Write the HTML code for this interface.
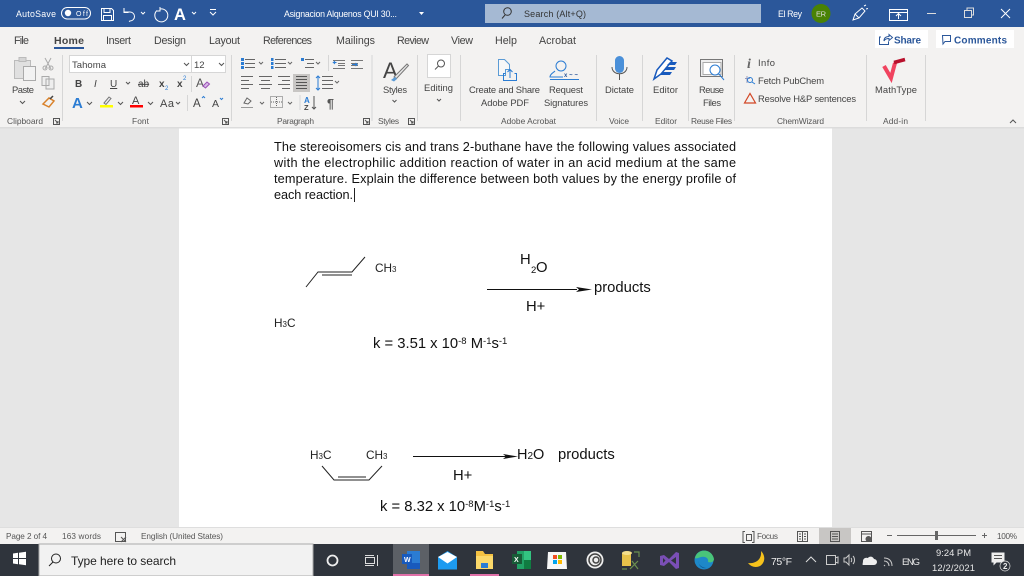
<!DOCTYPE html>
<html><head><meta charset="utf-8"><title>Word</title>
<style>
html,body{margin:0;padding:0;width:1024px;height:576px;overflow:hidden;background:#e6e6e6}
svg{display:block;font-family:"Liberation Sans",sans-serif}
.t{font-size:8.8px;fill:#fff}
.tab{font-size:10.7px;fill:#444}
.r{font-size:9.4px;fill:#444}
.g{font-size:8.4px;fill:#555}
.s{font-size:8.2px;fill:#555}
.d{font-size:12.7px;fill:#111}
.ic{fill:none;stroke:#555;stroke-width:1}
.ib{fill:none;stroke:#2b7cd3;stroke-width:1}
.w{fill:none;stroke:#fff;stroke-width:1}
.tb{font-size:9.400px;fill:#e8e8e8}
.big{font-size:14.8px;fill:#111}
.sup{font-size:9.5px}
.lab{font-size:11.8px;fill:#222}
</style></head><body>
<svg xmlns="http://www.w3.org/2000/svg" width="1024" height="576" viewBox="0 0 1024 576">
<!-- backgrounds -->
<rect width="1024" height="576" fill="#e6e6e6"/>
<rect x="179" y="128" width="653" height="399" fill="#fff"/>
<rect y="0" width="1024" height="27" fill="#2b579a"/>
<rect y="27" width="1024" height="100" fill="#f3f2f1"/>
<rect y="127" width="1024" height="1.5" fill="#dcdcdc"/>
<rect y="527" width="1024" height="1" fill="#dedede"/>
<rect y="528" width="1024" height="16" fill="#f3f2f1"/>
<rect y="544" width="1024" height="32" fill="#2f343c"/>

<!-- title bar -->
<text x="16" y="17" class="t" textLength="40">AutoSave</text>
<rect x="61.5" y="7.500" width="29" height="11.500" rx="5.700" fill="none" stroke="#fff"/>
<circle cx="68" cy="13" r="3.200" fill="#fff"/>
<text x="76" y="16" style="font-size:7px;fill:#fff" textLength="12">Off</text>
<path class="w" d="M101.500 8.500h10l2 2v10h-12zM104 8.500v4h6v-4M103.500 20.500v-5h8v5"/>
<path class="w" d="M124 12h6a4.500 4.500 0 0 1 0 9l-1 .5M124 8v4.500h4.500"/>
<path class="w" d="M141 12l2 2 2-2" stroke-width=".8"/>
<path class="w" d="M160 8a6.500 6.500 0 1 1-3 1.500M160 6v4h-3" transform="translate(0 1)"/>
<text x="174" y="20" style="font-size:16.500px;font-weight:bold;fill:#fff">A</text>
<path class="w" d="M192 12l2 2 2-2M210 12l3 3 3-3M210 9.500h6" stroke-width=".8"/>
<text x="284" y="17" class="t" textLength="113">Asignacion Alquenos QUI 30...</text>
<path d="M419 12h5l-2.500 3z" fill="#fff"/>
<rect x="485" y="4" width="276" height="19" fill="#a5b9d3"/>
<circle cx="507.500" cy="11.500" r="3.800" fill="none" stroke="#333"/><path d="M505 15l-3 3.500" stroke="#333" fill="none"/>
<text x="524" y="17" style="font-size:9px;fill:#333" textLength="62">Search (Alt+Q)</text>
<text x="778" y="17" class="t" textLength="24">El Rey</text>
<circle cx="821" cy="13.500" r="9.500" fill="#498205"/>
<text x="816" y="16.500" style="font-size:7.500px;fill:#ddd" textLength="10">ER</text>
<path class="w" d="M853 20l2-6 7-6 3 3-6 7zM855 14l4 4M864 6l2-1M866 9l2-.5" />
<path class="w" d="M889.500 9.500h18v11h-18zM889.500 12.500h18M898.500 19v-5M896 16l2.500-2.500 2.500 2.500"/>
<path d="M927 13.500h9" stroke="#ddd" fill="none"/>
<path d="M964.500 10.500h7v7h-7zM967 10v-2h6.500v7h-2" fill="none" stroke="#ddd" stroke-width="1"/>
<path d="M1001 9l9 9M1010 9l-9 9" stroke="#fff" fill="none"/>

<!-- tabs -->
<text x="14" y="44" class="tab" textLength="15">File</text>
<text x="54" y="44" style="font-size:10.500px;font-weight:bold;fill:#444" textLength="30">Home</text>
<rect x="54" y="47" width="30" height="2" fill="#2b579a"/>
<text x="106" y="44" class="tab" textLength="25">Insert</text>
<text x="154" y="44" class="tab" textLength="32">Design</text>
<text x="209" y="44" class="tab" textLength="31">Layout</text>
<text x="263" y="44" class="tab" textLength="49">References</text>
<text x="336" y="44" class="tab" textLength="39">Mailings</text>
<text x="397" y="44" class="tab" textLength="32">Review</text>
<text x="451" y="44" class="tab" textLength="22">View</text>
<text x="495" y="44" class="tab" textLength="22">Help</text>
<text x="539" y="44" class="tab" textLength="37">Acrobat</text>
<rect x="875" y="30" width="53" height="18" fill="#fff"/>
<path d="M881 37h-1.500v7.500h9v-3M884 41c0-3 2-4.500 5-4.500v-2l3.500 3-3.500 3v-2c-2 0-4 .5-5 2.500z" fill="none" stroke="#2b579a"/>
<text x="894" y="43.500" style="font-size:10px;fill:#2b579a;font-weight:bold" textLength="27">Share</text>
<rect x="936" y="30" width="78" height="18" fill="#fff"/>
<path d="M942.500 35.500h8v6h-5.500l-2 2.500z" fill="none" stroke="#2b579a"/>
<text x="954" y="43.500" style="font-size:10px;fill:#2b579a;font-weight:bold" textLength="53">Comments</text>

<!-- clipboard -->
<path d="M14.500 60.500h16v18h-16z" fill="#e0e0e0" stroke="#bbb"/><rect x="19" y="57.500" width="7" height="4" fill="#d5d5d5" stroke="#bbb"/><rect x="23.500" y="66.500" width="12" height="14" fill="#f2f2f2" stroke="#aaa"/>
<path d="M45 58l6 11M51 58l-6 11" stroke="#aaa" fill="none"/><circle cx="45" cy="68" r="2" fill="none" stroke="#aaa"/><circle cx="51" cy="68" r="2" fill="none" stroke="#aaa"/>
<path d="M42 76.500h7v9h-7zM46 79h8v10h-8z" fill="#eee" stroke="#aaa"/>
<text x="12" y="93" class="r" textLength="22">Paste</text>
<path d="M20 101l2.500 2.500 2.500-2.500" class="ic"/>
<path d="M43 104l6-6 5 3-5 6z" fill="#f2f2f2" stroke="#d9822b" stroke-width="1.500"/><path d="M50 99l3-3" stroke="#444" stroke-width="1.500"/>
<text x="7" y="124" class="g" textLength="36">Clipboard</text>
<path class="ic" d="M53.500 118.500h6v6h-6zM55 120l3 3M58 121v2h-2" stroke-width=".7"/>
<path d="M62.500 55v66" stroke="#d6d6d6"/>

<!-- font -->
<rect x="69.500" y="55.500" width="122" height="17" fill="#fff" stroke="#d6d6d6"/>
<rect x="191.500" y="55.500" width="34" height="17" fill="#fff" stroke="#d6d6d6"/>
<text x="72" y="68" style="font-size:9.500px;fill:#444" textLength="34">Tahoma</text>
<text x="194" y="68" style="font-size:9.500px;fill:#444">12</text>
<path class="ic" d="M184 63l2.500 2.500 2.500-2.500M219 63l2.500 2.500 2.500-2.500"/>
<text x="75" y="87" style="font-size:10px;font-weight:bold;fill:#444">B</text>
<text x="94" y="87" style="font-size:10px;font-style:italic;fill:#444">I</text>
<text x="110" y="87" style="font-size:10px;fill:#444;text-decoration:underline">U</text>
<path class="ic" d="M126 82l2 2 2-2"/>
<text x="138" y="87" style="font-size:10px;fill:#444;text-decoration:line-through">ab</text>
<text x="159" y="87" style="font-size:10px;font-weight:bold;fill:#444">x</text><text x="165" y="90" style="font-size:6px;fill:#2b7cd3">2</text>
<text x="177" y="87" style="font-size:10px;font-weight:bold;fill:#444">x</text><text x="183" y="80" style="font-size:6px;fill:#2b7cd3">2</text>
<path d="M191.500 76v16" stroke="#d6d6d6"/>
<text x="196" y="87" style="font-size:12px;fill:#555">A</text><path d="M203 86l4-4 2.500 2-4 4z" fill="#d8b8e8" stroke="#9a4fb5"/>
<text x="72" y="108" style="font-size:15px;font-weight:bold;fill:#2b7cd3">A</text>
<path class="ic" d="M87 102l2.500 2.500 2.500-2.500"/>
<path d="M104 103l5-6 2 1.500-5 6z" fill="#eee" stroke="#777"/><rect x="100" y="105" width="13" height="2.500" fill="#ffff00"/>
<path class="ic" d="M118 102l2.500 2.500 2.500-2.500"/>
<text x="132" y="104" style="font-size:11px;fill:#444">A</text><rect x="130" y="105" width="13" height="2.500" fill="#f00"/>
<path class="ic" d="M148 102l2.500 2.500 2.500-2.500"/>
<text x="160" y="107" style="font-size:11px;fill:#444" textLength="14">Aa</text>
<path class="ic" d="M176 102l2 2 2-2"/>
<path d="M187.500 95v16" stroke="#d6d6d6"/>
<text x="193" y="107" style="font-size:11.500px;fill:#444">A</text><path d="M202 98l1.500-1.500 1.500 1.500" class="ib"/>
<text x="212" y="107" style="font-size:10.500px;fill:#444">A</text><path d="M220 98l1.500 1.500 1.500-1.500" class="ib"/>
<text x="132" y="124" class="g" textLength="17">Font</text>
<path class="ic" d="M222.500 118.500h6v6h-6zM224 120l3 3M227 121v2h-2" stroke-width=".7"/>
<path d="M231.500 55v66" stroke="#d6d6d6"/>

<!-- paragraph -->
<g fill="none" stroke="#666">
<path d="M245 59.500h10M245 63.500h10M245 67.500h10M275 59.500h11M275 63.500h11M275 67.500h11M305 59.500h9M307 63.500h7M305 67.500h9"/>
<path d="M333 60.500h12M338 63.500h7M338 65.500h7M333 68.500h12M351 60.500h12M351 63.500h7M351 65.500h7M351 68.500h12" stroke="#777" transform="translate(0 0)"/>
<path d="M241 76.500h12M241 80.500h8M241 84.500h12M241 88.500h8M259 76.500h13M261 80.500h9M259 84.500h13M261 88.500h9M278 76.500h12M282 80.500h8M278 84.500h12M282 88.500h8"/>
<path d="M322 76.500h11M322 80.500h11M322 84.500h11M322 88.500h11"/>
<path d="M241 107.500h12" stroke="#999"/>
<path d="M244 103l3-5 4 3-3 3z"/>
<rect x="270.500" y="96.500" width="12" height="11" stroke-dasharray="1 1"/><path d="M276.500 97v10M271 102h11" stroke-dasharray="1 1"/>
<path d="M259 62l2 2 2-2M288 62l2 2 2-2M316 62l2 2 2-2M335 81l2 2 2-2M260 102l2 2 2-2M288 102l2 2 2-2"/>
</g>
<path d="M328.500 55v16" stroke="#d6d6d6"/>
<g fill="#2b7cd3"><rect x="241" y="58" width="3" height="3"/><rect x="241" y="62" width="3" height="3"/><rect x="241" y="66" width="3" height="3"/><rect x="271" y="58" width="2.500" height="3"/><rect x="271" y="62" width="2.500" height="3"/><rect x="271" y="66" width="2.500" height="3"/><rect x="301" y="58" width="3" height="3"/></g>
<path d="M336.500 62.500h-3l1.500-1.500M333.500 62.500l1.500 1.500M352 64.500h5l-1.500-1.500M357 64.500l-1.500 1.500" class="ib"/>
<rect x="293" y="74" width="17" height="18" fill="#c8c6c4"/>
<path d="M296 76.500h11M296 79.500h11M296 82.500h11M296 85.500h11M296 88.500h11" stroke="#555" fill="none"/>
<path d="M318 76v14M316 78l2-2 2 2M316 88l2 2 2-2" class="ib"/>
<text x="304" y="103" style="font-size:8px;fill:#2b7cd3;font-weight:bold">A</text><text x="304" y="110" style="font-size:7.500px;fill:#444;font-weight:bold">Z</text>
<path d="M314 96v13M312 107l2 2 2-2" class="ic"/>
<path d="M300 95v15" stroke="#d6d6d6"/>
<text x="327" y="108" style="font-size:12.500px;font-weight:bold;fill:#555">¶</text>
<text x="277" y="124" class="g" textLength="37">Paragraph</text>
<path d="M372 55v66" stroke="#d6d6d6"/>
<path class="ic" d="M363.500 118.500h6v6h-6zM365 120l3 3M368 121v2h-2" stroke-width=".7"/>
<text x="378" y="124" class="g" textLength="21">Styles</text>
<path class="ic" d="M408.500 118.500h6v6h-6zM410 120l3 3M413 121v2h-2" stroke-width=".7"/>

<!-- styles -->
<text x="383" y="78" style="font-size:22px;fill:#444">A</text>
<path d="M394 77l13-13 1.500 1.500-12 13z" fill="#e8e8e8" stroke="#777"/><path d="M391 80l4-3 2 2-3 2.500z" fill="#5b9bd5"/>
<text x="383" y="93" class="r" textLength="24">Styles</text>
<path class="ic" d="M392.500 100l2 2 2-2"/>
<path d="M417.500 55v66" stroke="#d6d6d6"/>
<!-- editing -->
<rect x="427.500" y="54.500" width="23" height="23" fill="#fff" stroke="#d6d6d6"/>
<circle cx="441" cy="63.500" r="3.500" class="ic"/><path d="M438.500 66l-3.500 3.500" class="ic"/>
<text x="424" y="91" class="r" textLength="29">Editing</text>
<path class="ic" d="M437 99l2 2 2-2"/>
<path d="M460.500 55v66" stroke="#d6d6d6"/>

<!-- acrobat -->
<path d="M498.500 59.500h6l5 5v5h-4v6h-7z" fill="#f7f7f7" stroke="#5b9bd5"/>
<path d="M505.500 73.500h-2v7h13v-7h-2M510 78v-8M507.500 72l2.500-2.500 2.500 2.500" class="ib"/>
<circle cx="561" cy="66" r="5" class="ib"/>
<path d="M555 71c-2 2-5 3-5 6h13" class="ib"/><path d="M550 79.500h29" stroke="#2b7cd3"/>
<text x="564" y="77" style="font-size:6px;fill:#2b579a;font-weight:bold" textLength="14">x~~</text>
<text x="469" y="93" class="r" textLength="71">Create and Share</text>
<text x="481" y="106" class="r" textLength="48">Adobe PDF</text>
<text x="549" y="93" class="r" textLength="34">Request</text>
<text x="544" y="106" class="r" textLength="44">Signatures</text>
<text x="501" y="124" class="g" textLength="55">Adobe Acrobat</text>
<path d="M596.500 55v66" stroke="#d6d6d6"/>
<!-- voice -->
<rect x="615" y="56" width="9" height="17" rx="4.500" fill="#4a90d9"/>
<path d="M612 67c0 9 15 9 15 0M619.500 74v6" class="ic"/>
<text x="605" y="93" class="r" textLength="29">Dictate</text>
<text x="609" y="124" class="g" textLength="20">Voice</text>
<path d="M642.500 55v66" stroke="#d6d6d6"/>
<!-- editor -->
<path d="M654 79l3-9 10-12 5 3-11 13z" fill="#fff" stroke="#185abd" stroke-width="1.500"/>
<path d="M670 62h7l-2 3h-8zM666 67h10l-2 3h-10zM662 72h10l-2 3h-10z" fill="#185abd"/>
<text x="653" y="93" class="r" textLength="25">Editor</text>
<text x="655" y="124" class="g" textLength="22">Editor</text>
<path d="M688.500 55v66" stroke="#d6d6d6"/>
<!-- reuse -->
<rect x="700.500" y="59.500" width="22" height="17" fill="#eee" stroke="#777"/><rect x="703" y="62.500" width="18" height="12" fill="#fff" stroke="#aaa"/>
<circle cx="715" cy="70" r="5" fill="#fff" stroke="#2b7cd3"/><path d="M719 74l5 6" stroke="#2b7cd3"/>
<text x="699" y="93" class="r" textLength="25">Reuse</text>
<text x="703" y="106" class="r" textLength="18">Files</text>
<text x="691" y="124" class="g" textLength="41">Reuse Files</text>
<path d="M734.500 55v66" stroke="#d6d6d6"/>
<!-- chemwizard -->
<text x="747" y="68" style="font-size:14px;font-style:italic;font-family:'Liberation Serif',serif;font-weight:bold;fill:#666">i</text>
<text x="758" y="66" class="r" textLength="17">Info</text>
<path d="M745 78.500h5M747 76v7" stroke="#99b" fill="none"/><circle cx="750" cy="80" r="2.500" class="ib"/><path d="M752 82l3 2" class="ib"/>
<text x="758" y="84" class="r" textLength="66">Fetch PubChem</text>
<path d="M744.500 103l5.500-9.500 5.500 9.500z" fill="none" stroke="#d24726" stroke-width="1.200"/>
<text x="758" y="102" class="r" textLength="98">Resolve H&amp;P sentences</text>
<text x="777" y="124" class="g" textLength="47">ChemWizard</text>
<path d="M866.500 55v66" stroke="#d6d6d6"/>
<!-- mathtype -->
<path d="M884 66l7 12 4-15" fill="none" stroke="#f0435f" stroke-width="4"/><path d="M894 62.500l11-3" stroke="#b8102c" stroke-width="3.500" fill="none"/>
<text x="875" y="93" class="r" textLength="42">MathType</text>
<text x="883" y="124" class="g" textLength="25">Add-in</text>
<path d="M925.500 55v66" stroke="#d6d6d6"/>
<path d="M1010 123l3-3 3 3" class="ic"/>

<!-- document text -->
<text x="274" y="151" class="d" textLength="462">The stereoisomers cis and trans 2-buthane have the following values associated</text>
<text x="274" y="167" class="d" textLength="462">with the electrophilic addition reaction of water in an acid medium at the same</text>
<text x="274" y="183" class="d" textLength="462">temperature. Explain the difference between both values by the energy profile of</text>
<text x="274" y="199" class="d" textLength="79">each reaction.</text>
<path d="M354.500 188v14" stroke="#222"/>

<!-- first reaction -->
<path d="M306 287L318 272H352L365 257" fill="none" stroke="#222"/>
<path d="M322 275H352" stroke="#222"/>
<text x="375" y="272" class="lab">CH<tspan style="font-size:8px">3</tspan></text>
<text x="520" y="264" class="big">H</text><text x="531" y="273" style="font-size:9.500px;fill:#111">2</text><text x="536" y="272" class="big">O</text>
<path d="M487 289.500h90" stroke="#111"/><path d="M576 287l16 2.500-16 2.500 3-2.500z" fill="#111"/>
<text x="594" y="292" class="big">products</text>
<text x="526" y="311" class="big">H+</text>
<text x="274" y="327" class="lab">H<tspan style="font-size:8px">3</tspan>C</text>
<text x="373" y="348" class="big">k = 3.51 x 10<tspan dy="-4" class="sup">-8</tspan><tspan dy="4"> M</tspan><tspan dy="-4" class="sup">-1</tspan><tspan dy="4">s</tspan><tspan dy="-4" class="sup">-1</tspan></text>

<!-- second reaction -->
<text x="310" y="459" class="lab">H<tspan style="font-size:8px">3</tspan>C</text>
<text x="366" y="459" class="lab">CH<tspan style="font-size:8px">3</tspan></text>
<path d="M322 466L334 480H369L382 466" fill="none" stroke="#222"/>
<path d="M338 477H366" stroke="#222"/>
<path d="M413 456.500h95" stroke="#111"/><path d="M503 454l15 2.500-15 2.500 3-2.500z" fill="#111"/>
<text x="517" y="459" style="font-size:14.500px;fill:#111">H<tspan style="font-size:10px">2</tspan>O</text>
<text x="558" y="459" class="big">products</text>
<text x="453" y="480" class="big">H+</text>
<text x="380" y="511" class="big">k = 8.32 x 10<tspan dy="-4" class="sup">-8</tspan><tspan dy="4">M</tspan><tspan dy="-4" class="sup">-1</tspan><tspan dy="4">s</tspan><tspan dy="-4" class="sup">-1</tspan></text>

<!-- status bar -->
<text x="6" y="539" class="s" textLength="41">Page 2 of 4</text>
<text x="62" y="539" class="s" textLength="39">163 words</text>
<path d="M115.500 532.500h10v9h-10z" class="ic" stroke="#666"/><path d="M121 537l5 5M126 537l-5 5" stroke="#555" fill="none"/>
<text x="141" y="539" class="s" textLength="82">English (United States)</text>
<path d="M745 531.500h-2v11h2M752 531.500h2v11h-2M746.500 534.500h5v6h-5z" class="ic"/>
<text x="757" y="539" class="s" textLength="21">Focus</text>
<path d="M797.500 531.500h10v10h-10zM802.500 531.500v10M799 534h2M799 536.500h2M799 539h2M804 534h2M804 536.500h2M804 539h2" class="ic"/>
<rect x="819" y="528" width="32" height="16" fill="#c8c6c4"/>
<path d="M830.500 531.500h9v10h-9zM832 534h6M832 536.500h6M832 539h6" class="ic"/>
<path d="M861.500 531.500h10v10h-10zM861.500 534h10" class="ic"/><circle cx="868.500" cy="539" r="3" fill="#555"/>
<path d="M887 535.500h5M897 535.500h79M982 535.500h5M984.500 533v5" stroke="#666" fill="none"/>
<rect x="935" y="531" width="3" height="9" fill="#666"/>
<text x="997" y="539" class="s" textLength="20">100%</text>

<!-- taskbar -->
<path d="M13 553.500l5-.7v5.200h-5zM19 552.700l7-1v6.300h-7zM13 559h5v5.200l-5-.7zM19 559h7v6.300l-7-1z" fill="#fff"/>
<rect x="39" y="544" width="274" height="32" fill="#f2f2f2" stroke="#aaa"/>
<circle cx="56" cy="558.500" r="4.500" fill="none" stroke="#222"/><path d="M53 562l-4 4" stroke="#222" fill="none"/>
<text x="71" y="565" style="font-size:12px;fill:#222" textLength="105">Type here to search</text>
<circle cx="332.500" cy="560.500" r="5" fill="none" stroke="#eee" stroke-width="1.800"/>
<path d="M365.500 557.500h9v6h-9zM365 555.500h9M365 565.500h9M377.500 555v11" fill="none" stroke="#ddd"/>
<rect x="393" y="544" width="36" height="32" fill="#5c6066"/>
<rect x="393" y="574" width="36" height="2" fill="#e070a8"/>
<rect x="407" y="551" width="13" height="18" fill="#2b7cd3"/><rect x="407" y="563" width="13" height="6" fill="#185abd"/><rect x="402" y="554" width="10" height="10" fill="#185abd"/>
<text x="404" y="562" style="font-size:7px;font-weight:bold;fill:#fff">W</text>
<path d="M438 557l9.500-6 9.500 6v12.500h-19z" fill="#1d9bf0"/><path d="M438 557l9.500 6.500 9.500-6.500-9.500-5z" fill="#fff"/>
<rect x="470" y="574" width="29" height="2" fill="#e070a8"/>
<path d="M476 551h7l2 3h8v15h-17z" fill="#f5c242"/><rect x="476" y="556" width="17" height="13" fill="#fcd96a"/><rect x="481" y="563" width="7" height="5" fill="#2b7cd3"/>
<rect x="517" y="551" width="14" height="18" fill="#21a366"/><rect x="524" y="551" width="7" height="9" fill="#33c481"/><rect x="524" y="560" width="7" height="9" fill="#107c41"/><rect x="512" y="554" width="10" height="10" fill="#185c37"/>
<text x="514" y="562" style="font-size:7px;font-weight:bold;fill:#fff">X</text>
<path d="M548 552h18l1 17h-20z" fill="#f7f7f7"/><rect x="553" y="555" width="4" height="4" fill="#f25022"/><rect x="558" y="555" width="4" height="4" fill="#7fba00"/><rect x="553" y="560" width="4" height="4" fill="#00a4ef"/><rect x="558" y="560" width="4" height="4" fill="#ffb900"/>
<circle cx="595" cy="560" r="8.500" fill="#eee"/><circle cx="595" cy="560" r="6" fill="none" stroke="#444" stroke-width="1.500"/><circle cx="596" cy="560" r="3" fill="none" stroke="#444" stroke-width="1.500"/>
<path d="M622 553h9v13h-9z" fill="#e8c34a"/><ellipse cx="627" cy="553" rx="5" ry="2" fill="#f6e08c"/>
<path d="M634 552h5v5M622 569h5M630 569l8-8M632 561l6 8" stroke="#6b8f4f" fill="none" stroke-width="1.200"/>
<path d="M660 556l4-1 5 4 7-7 3 1v15l-3 1-7-7-5 4-4-1zM663 558v5l2.500-2.500zM676 557l-5 3.500 5 3.500z" fill="#7a4fb5"/>
<circle cx="704" cy="560" r="9.500" fill="#1e88c8"/><path d="M695 558c2-10 17-10 19 1 0 3-3 4-6 3 1-4-3-6-7-5-3 1-5 2-6 1z" fill="#49c47a"/><path d="M698 561c0 4 5 7 9 7-4 1-8-1-9-7z" fill="#0c5a96"/>
<path d="M761 551c1 8-5 13-13 12 3 4 8 5 12 3 5-3 6-10 1-15z" fill="#f6c21c"/>
<text x="771" y="565" style="font-size:10.500px;fill:#eee" textLength="21">75°F</text>
<path d="M806 562l5-5 5 5" fill="none" stroke="#ddd"/>
<path d="M826.500 555.500h9v9h-9zM835 558l3-1v6l-3-1" fill="none" stroke="#ccc"/>
<path d="M844 558h2l3-3v10l-3-3h-2zM851 558c1 1 1 3 0 4M853 556c2 2 2 6 0 8" fill="none" stroke="#ccc"/>
<path d="M863 565h11a3 3 0 0 0 0-6c-1-3-5-3-6-1-3-1-5 1-5 3s-1 4 0 4z" fill="#eee"/>
<path d="M884 565l1 1M884 561c3 0 5 2 5 5M884 558c5 0 8 3 8 8" fill="none" stroke="#ccc"/>
<text x="902" y="565" style="font-size:9.500px;fill:#e8e8e8" textLength="18">ENG</text>
<text x="936" y="556" class="tb" textLength="35">9:24 PM</text>
<text x="932" y="571" class="tb" textLength="43">12/2/2021</text>
<path d="M991.500 552.500h13v10h-8l-3 3v-3h-2z" fill="#eee"/><path d="M994 555.500h8M994 558.500h8" stroke="#555"/>
<circle cx="1005" cy="566" r="5" fill="#2f343c" stroke="#ddd" stroke-width=".7"/>
<text x="1003" y="569" style="font-size:8px;fill:#eee;font-weight:bold">2</text>
</svg>
</body></html>
